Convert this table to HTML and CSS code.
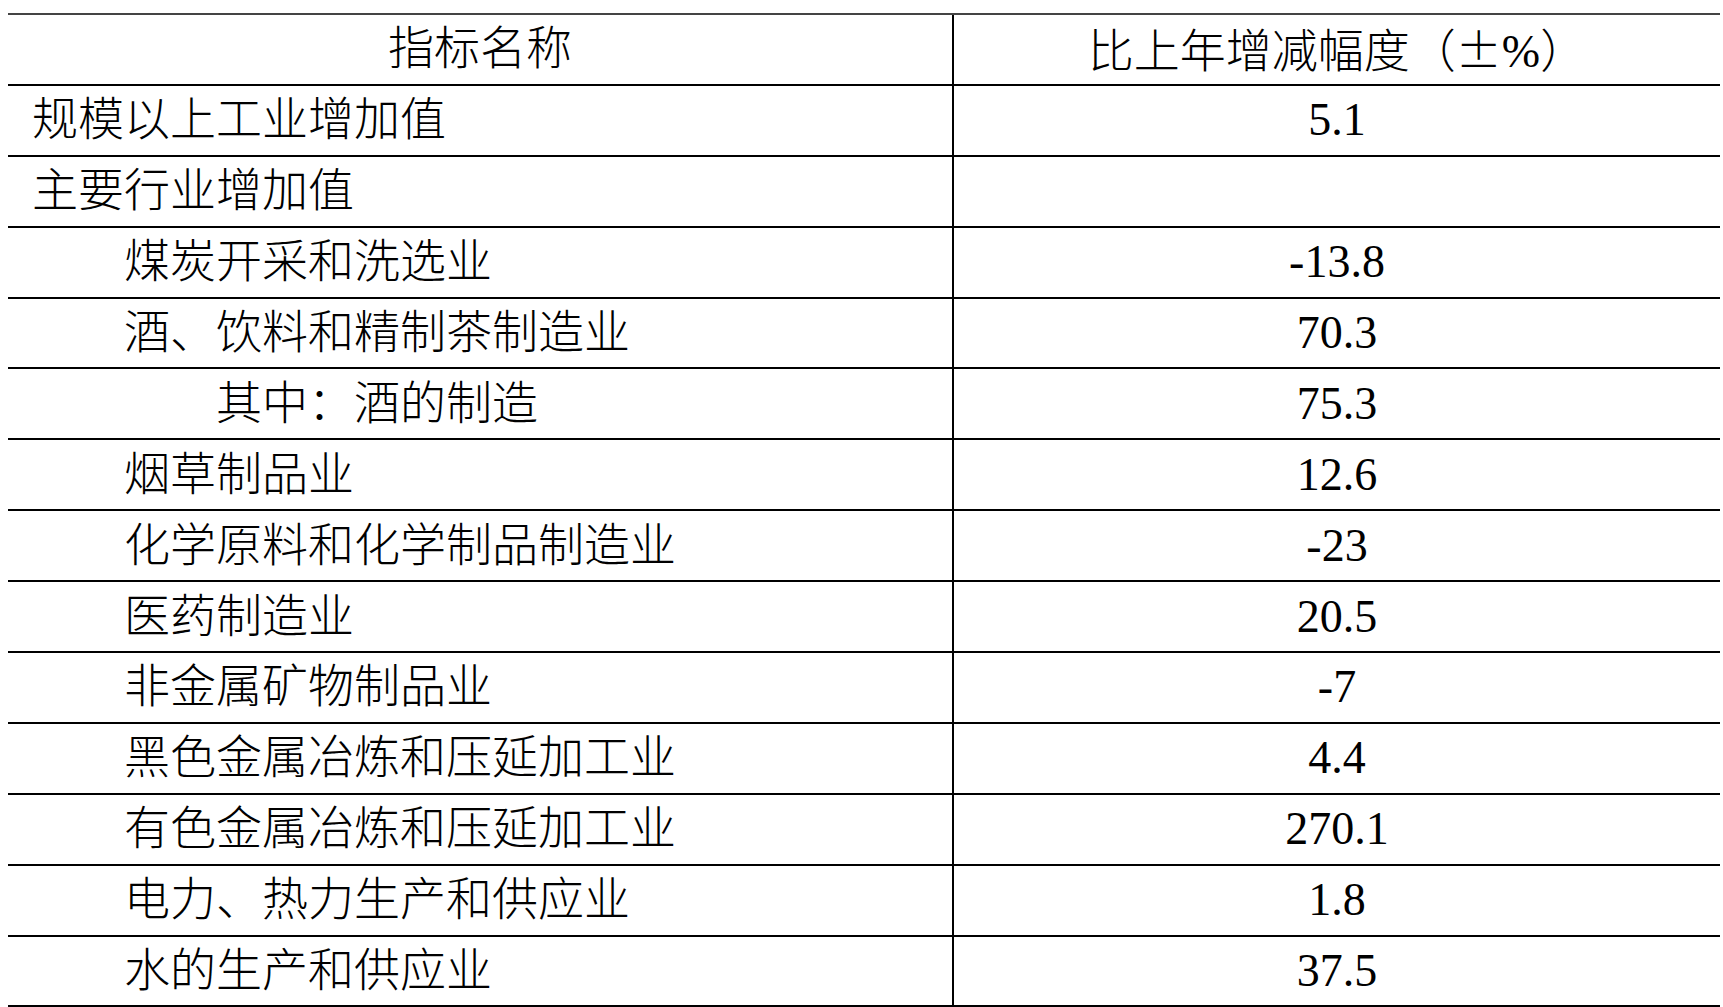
FILE: index.html
```html
<!DOCTYPE html>
<html lang="zh-CN">
<head>
<meta charset="utf-8">
<title>规模以上工业增加值</title>
<link rel="stylesheet" href="styles.css">
</head>
<body>
<table class="stats">
  <thead>
    <tr><th class="name-col">指标名称</th><th class="val-col">比上年增减幅度（<span class="pm">±</span>%）</th></tr>
  </thead>
  <tbody>
    <tr><td class="l1">规模以上工业增加值</td><td class="val">5.1</td></tr>
    <tr><td class="l1">主要行业增加值</td><td class="val"></td></tr>
    <tr><td class="l2">煤炭开采和洗选业</td><td class="val">-13.8</td></tr>
    <tr><td class="l2">酒、饮料和精制茶制造业</td><td class="val">70.3</td></tr>
    <tr><td class="l3">其中：酒的制造</td><td class="val">75.3</td></tr>
    <tr><td class="l2">烟草制品业</td><td class="val">12.6</td></tr>
    <tr><td class="l2">化学原料和化学制品制造业</td><td class="val">-23</td></tr>
    <tr><td class="l2">医药制造业</td><td class="val">20.5</td></tr>
    <tr><td class="l2">非金属矿物制品业</td><td class="val">-7</td></tr>
    <tr><td class="l2">黑色金属冶炼和压延加工业</td><td class="val">4.4</td></tr>
    <tr><td class="l2">有色金属冶炼和压延加工业</td><td class="val">270.1</td></tr>
    <tr><td class="l2">电力、热力生产和供应业</td><td class="val">1.8</td></tr>
    <tr><td class="l2">水的生产和供应业</td><td class="val">37.5</td></tr>
  </tbody>
</table>
</body>
</html>
```
FILE: styles.css
```css
html, body {
  margin: 0;
  padding: 0;
  background: #ffffff;
}
body {
  padding: 13px 0 0 8px;
  font-family: "Liberation Serif", "Noto Sans CJK SC", serif;
  color: #000000;
}
.stats {
  width: 1712px;
  border-collapse: collapse;
  table-layout: fixed;
  font-size: 46px;
  line-height: 1;
  font-weight: 300;
}
.stats th,
.stats td {
  height: 68.9px;
  padding: 0;
  border-top: 2px solid #000;
  border-bottom: 2px solid #000;
  vertical-align: middle;
  font-weight: 300;
  white-space: nowrap;
}
.stats thead th {
  border-top-color: #444;
}
.pm {
  font-family: "Noto Sans CJK SC", sans-serif;
}
.name-col {
  width: 944px;
  text-align: center;
}
.val-col,
.stats td.val {
  border-left: 2px solid #000;
  text-align: center;
}
.l1 { padding-left: 24px !important; text-align: left; }
.l2 { padding-left: 116px !important; text-align: left; }
.l3 { padding-left: 208px !important; text-align: left; }
```
